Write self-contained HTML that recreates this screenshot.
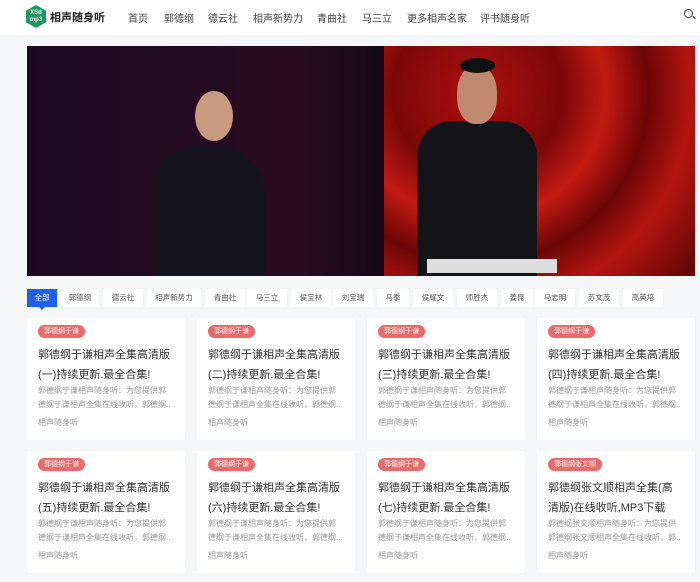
<!DOCTYPE html>
<html><head><meta charset="utf-8"><style>
*{margin:0;padding:0;box-sizing:border-box}
body{width:700px;height:582px;overflow:hidden;background:#f5f6f8;font-family:"Liberation Sans","Noto Sans CJK SC",sans-serif;position:relative}
.hd{position:absolute;left:0;top:0;width:700px;height:35px;background:#fff}
.logo{position:absolute;left:26px;top:5px;width:20px;height:23px;background:#1a9b5c;clip-path:polygon(50% 0,100% 25%,100% 75%,50% 100%,0 75%,0 25%);color:#fff;font-size:6px;line-height:7px;text-align:center;padding-top:5px;font-weight:bold}
.brand{position:absolute;left:50px;top:9px;font-size:11px;font-weight:bold;color:#222}
.nav{position:absolute;top:10px;font-size:10px;color:#444}
.srch{position:absolute;left:684px;top:9px;width:9px;height:9px;border:1.3px solid #444;border-radius:50%}
.srch:after{content:"";position:absolute;left:7px;top:7px;width:4px;height:1.3px;background:#444;transform:rotate(45deg)}
.ban{position:absolute;left:27px;top:46px;width:668px;height:230px;overflow:hidden;background:linear-gradient(90deg,#1a0a20,#2a0c22 40%,#160816 53%)}
.red{position:absolute;left:357px;top:0;width:311px;height:230px;background:radial-gradient(circle at 30% 20%,#b01010,#7a0808 30%,#c21a12 45%,#6a0606 60%,#b3150f 75%,#5c0505);}
.tabs{position:absolute;top:289px;left:27px;height:18px}
.tab{position:absolute;top:0;height:18px;background:#fff;font-size:7.5px;color:#555;text-align:center;line-height:18px}
.tab.on{background:#1e5ff0;color:#fff}
.card{position:absolute;width:158px;height:122px;background:#fff}
.tag{position:absolute;left:11px;top:7px;height:13px;padding:0 6px;background:#e86a6a;color:#fff;border-radius:7px;font-size:7px;line-height:13px}
.t{position:absolute;left:11px;top:27px;width:135px;font-size:11px;line-height:20px;color:#333}
.d{position:absolute;left:11px;top:66px;width:132px;font-size:8px;line-height:13.5px;color:#999;white-space:nowrap;overflow:hidden}
.s{position:absolute;left:11px;top:99px;font-size:8px;color:#999}
</style></head><body>
<div class="hd">
<div class="logo">XSd<br>mp3</div>
<div class="brand">相声随身听</div>
<span class="nav" style="left:128px">首页</span>
<span class="nav" style="left:164px">郭德纲</span>
<span class="nav" style="left:208px">德云社</span>
<span class="nav" style="left:253px">相声新势力</span>
<span class="nav" style="left:317px">青曲社</span>
<span class="nav" style="left:362px">马三立</span>
<span class="nav" style="left:407px">更多相声名家</span>
<span class="nav" style="left:480px">评书随身听</span>
<div class="srch"></div>
</div>
<div class="ban">
<div class="red"></div>
<div style="position:absolute;left:128px;top:100px;width:110px;height:130px;background:#15141e;border-radius:40px 50px 0 0"></div>
<div style="position:absolute;left:168px;top:45px;width:38px;height:50px;background:#c89a80;border-radius:50%"></div>
<div style="position:absolute;left:390px;top:75px;width:120px;height:155px;background:#141318;border-radius:35px 35px 0 0"></div>
<div style="position:absolute;left:430px;top:20px;width:40px;height:58px;background:#c08a70;border-radius:45%"></div>
<div style="position:absolute;left:433px;top:12px;width:35px;height:15px;background:#111;border-radius:50%"></div>
<div style="position:absolute;left:400px;top:213px;width:130px;height:14px;background:#ddd"></div>
</div>
<div class="tabs">
<div class="tab on" style="left:0;width:30px">全部</div>
<div class="tab" style="left:34px;width:38px">郭德纲</div>
<div class="tab" style="left:76px;width:40px">德云社</div>
<div class="tab" style="left:120px;width:54px">相声新势力</div>
<div class="tab" style="left:178px;width:40px">青曲社</div>
<div class="tab" style="left:220px;width:40px">马三立</div>
<div class="tab" style="left:264px;width:40px">侯宝林</div>
<div class="tab" style="left:306px;width:40px">刘宝瑞</div>
<div class="tab" style="left:350px;width:32px">马季</div>
<div class="tab" style="left:386px;width:40px">侯耀文</div>
<div class="tab" style="left:430px;width:40px">师胜杰</div>
<div class="tab" style="left:474px;width:32px">姜昆</div>
<div class="tab" style="left:508px;width:40px">马志明</div>
<div class="tab" style="left:552px;width:40px">苏文茂</div>
<div class="tab" style="left:596px;width:40px">高英培</div>
</div>
<div style="position:absolute;left:39px;top:307px;border:3px solid transparent;border-top-color:#1e5ff0"></div>

<div class="card" style="left:27px;top:318px"><div class="tag">郭德纲于谦</div><div class="t">郭德纲于谦相声全集高清版(一)持续更新.最全合集!</div><div class="d">郭德纲于谦相声随身听：为您提供郭<br>德纲于谦相声全集在线收听，郭德纲...</div><div class="s">相声随身听</div></div>
<div class="card" style="left:197px;top:318px"><div class="tag">郭德纲于谦</div><div class="t">郭德纲于谦相声全集高清版(二)持续更新.最全合集!</div><div class="d">郭德纲于谦相声随身听：为您提供郭<br>德纲于谦相声全集在线收听，郭德纲...</div><div class="s">相声随身听</div></div>
<div class="card" style="left:367px;top:318px"><div class="tag">郭德纲于谦</div><div class="t">郭德纲于谦相声全集高清版(三)持续更新.最全合集!</div><div class="d">郭德纲于谦相声随身听：为您提供郭<br>德纲于谦相声全集在线收听，郭德纲...</div><div class="s">相声随身听</div></div>
<div class="card" style="left:537px;top:318px"><div class="tag">郭德纲于谦</div><div class="t">郭德纲于谦相声全集高清版(四)持续更新.最全合集!</div><div class="d">郭德纲于谦相声随身听：为您提供郭<br>德纲于谦相声全集在线收听，郭德纲...</div><div class="s">相声随身听</div></div>

<div class="card" style="left:27px;top:451px"><div class="tag">郭德纲于谦</div><div class="t">郭德纲于谦相声全集高清版(五)持续更新.最全合集!</div><div class="d">郭德纲于谦相声随身听：为您提供郭<br>德纲于谦相声全集在线收听，郭德纲...</div><div class="s">相声随身听</div></div>
<div class="card" style="left:197px;top:451px"><div class="tag">郭德纲于谦</div><div class="t">郭德纲于谦相声全集高清版(六)持续更新.最全合集!</div><div class="d">郭德纲于谦相声随身听：为您提供郭<br>德纲于谦相声全集在线收听，郭德纲...</div><div class="s">相声随身听</div></div>
<div class="card" style="left:367px;top:451px"><div class="tag">郭德纲于谦</div><div class="t">郭德纲于谦相声全集高清版(七)持续更新.最全合集!</div><div class="d">郭德纲于谦相声随身听：为您提供郭<br>德纲于谦相声全集在线收听，郭德纲...</div><div class="s">相声随身听</div></div>
<div class="card" style="left:537px;top:451px"><div class="tag">郭德纲张文顺</div><div class="t">郭德纲张文顺相声全集(高清版)在线收听,MP3下载</div><div class="d">郭德纲张文顺相声随身听：为您提供<br>郭德纲张文顺相声全集在线收听，郭...</div><div class="s">相声随身听</div></div>
</body></html>
